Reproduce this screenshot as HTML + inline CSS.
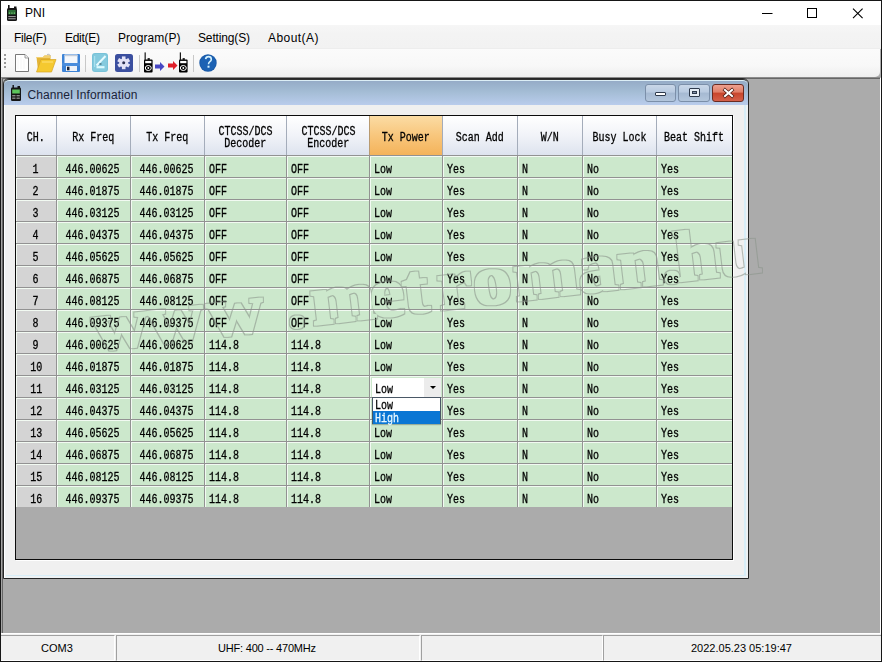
<!DOCTYPE html>
<html><head><meta charset="utf-8">
<style>
*{margin:0;padding:0;box-sizing:border-box}
html,body{width:882px;height:662px;overflow:hidden;background:#ababab;font-family:"Liberation Sans",sans-serif;position:relative}
.abs{position:absolute}
#frame{position:absolute;left:0;top:0;width:882px;height:662px;border:1px solid #161616;pointer-events:none;z-index:50}
#title{position:absolute;left:0;top:0;width:882px;height:25px;background:#fff}
#title .t{position:absolute;left:25px;top:6px;font-size:12px;color:#000}
#menu{position:absolute;left:0;top:25px;width:882px;height:24px;background:linear-gradient(#f6f6f6,#f3f3f3 40%,#f2f2f2);border-bottom:1px solid #ededed}
#menu span{position:absolute;top:6px;font-size:12px;letter-spacing:-0.3px;color:#000}
#tool{position:absolute;left:0;top:49px;width:880px;height:28px;background:linear-gradient(#fbfbfb,#f8f8f8 60%,#eeeeee);border-bottom-right-radius:5px}
#toolshadow{position:absolute;left:0;top:77px;width:882px;height:2px;background:#6a6a6a}
#mdi{position:absolute;left:1px;top:77px;width:880px;height:556px;background:#ababab;border-top:1px solid #8a8a8a;border-left:1px solid #a4a4a4;border-right:1px solid #fff;box-shadow:inset 1px 1px 0 #666}
#status{position:absolute;left:1px;top:633px;width:880px;height:28px;background:#f0f0f0;border-top:1px solid #fff}
#status span{position:absolute;top:8px;font-size:11px;color:#000}
.pn{position:absolute;top:1px;height:26px;border-top:1px solid #a0a0a0;border-left:1px solid #a0a0a0;border-right:1px solid #fff;border-bottom:1px solid #fff}

#child{position:absolute;left:3px;top:78px;width:746px;height:501px;border:1px solid #262626;border-radius:6px 6px 0 0;background:#eef2f4;box-shadow:inset 1px 0 0 #fff}
#ctitle{position:absolute;left:0;top:0;width:744px;height:26px;background:linear-gradient(#94aac6,#a3bcd4 45%,#b9ccec);border-radius:5px 5px 0 0;border-top:1px solid #2e2e2e;box-shadow:inset 0 1px 0 #dceef6}
#ctitle .t{position:absolute;left:23.5px;top:7.5px;font-size:12px;letter-spacing:0.1px;color:#1a2338}
#client{position:absolute;left:2px;top:26px;width:740px;height:471px;background:#f0f0f0;border-right:2px solid #d8eef8;border-bottom:1px solid #d8eef8}
.wb{position:absolute;top:84px;height:18px;border:1px solid #7b8fa9;border-radius:3px;background:linear-gradient(#c9d7e8,#b8cae0 45%,#a5b9d2 50%,#b3c6dc)}
.wb.cl{border-color:#6a2b22;background:linear-gradient(#eea08f,#e07f68 45%,#c8452c 50%,#d5604a)}
#grid{position:absolute;left:15px;top:115px;width:718px;height:445px;background:#ababab;border:1px solid #0c0c0c;box-shadow:1px 1px 0 #fff}
.hc{position:absolute;background:linear-gradient(#ffffff,#f1f3f8 50%,#dde3ee);border-left:1px solid #a4acba;display:flex;align-items:center;justify-content:center;text-align:center;font-family:"Liberation Mono",monospace;font-size:12px;line-height:12px;color:#000;padding-top:4px}
.hc.sel{background:linear-gradient(#fbdca4,#f8c67c 50%,#f4b35a);border-left:1px solid #b89a70}
.cc{position:absolute;background:#cce8cc;border-top:1px solid #929292;border-left:1px solid #929292;box-shadow:inset 1px 1px 0 #f2faf2;font-family:"Liberation Mono",monospace;font-size:12px;line-height:23px;padding-top:2.5px;padding-left:4px;color:#000;white-space:nowrap}
.cc.ch{background:#d4d4d4;text-align:center;padding-left:0;border-left:none}
.cc.num{text-align:center;padding-left:0;padding-right:2px}
.cbx{position:absolute;left:2px;top:2px;width:69px;height:19px;background:#fff;padding-left:3px;line-height:20px;padding-top:1.5px}
.cbb{position:absolute;right:0;top:0;width:17px;height:19px;background:#ececec}
.arr{position:absolute;left:6px;top:8px;width:0;height:0;border-left:3px solid transparent;border-right:3px solid transparent;border-top:3px solid #000}
#dd{position:absolute;left:372px;top:397px;width:69px;height:27px;border:1px solid #4a5866;background:#fff;font-family:"Liberation Mono",monospace;font-size:12px;line-height:13px;z-index:5;box-shadow:0 1px 1px rgba(0,0,0,0.25)}
#dd div{height:13px;padding-left:2px;padding-top:2px}
#dd .hl{background:#0a76d4;color:#e8f8ff}
#status .s1{left:41px}
.tx{display:inline-block;transform:scaleX(0.8333);transform-origin:0 50%;-webkit-text-stroke:0.3px}
.hc .tx,.ch .tx,.num .tx{transform-origin:50% 50%}
</style></head><body>
<div id="title">
  <svg class="abs" style="left:7px;top:5px" width="11" height="17" viewBox="0 0 11 17">
    <rect x="1" y="0" width="1.6" height="4" fill="#111"/><rect x="7" y="1.5" width="2.5" height="2.5" fill="#111"/>
    <rect x="0" y="3" width="10" height="13" rx="1.5" fill="#151515"/>
    <rect x="1.3" y="5" width="7.4" height="4.5" fill="#2e6e36"/><rect x="1.8" y="7.5" width="1.2" height="1.2" fill="#7ad07a"/><rect x="4.3" y="7.5" width="1.2" height="1.2" fill="#7ad07a"/><rect x="6.8" y="7.5" width="1.2" height="1.2" fill="#7ad07a"/>
    <rect x="1.3" y="11" width="7.4" height="1.1" fill="#9a9a9a"/><rect x="1.3" y="13.2" width="7.4" height="1.1" fill="#9a9a9a"/>
  </svg>
  <span class="t">PNI</span>
  <svg class="abs" style="left:762px;top:8px" width="12" height="12"><rect x="0" y="5" width="10.5" height="1" fill="#000"/></svg>
  <svg class="abs" style="left:806px;top:8px" width="12" height="12"><rect x="1.5" y="0.5" width="9" height="9" fill="none" stroke="#000" stroke-width="1"/></svg>
  <svg class="abs" style="left:852px;top:8px" width="12" height="12"><path d="M1 0.6L10.6 10.2M10.6 0.6L1 10.2" stroke="#000" stroke-width="1.1"/></svg>
</div>
<div id="menu">
  <span style="left:14px">File(F)</span>
  <span style="left:65px">Edit(E)</span>
  <span style="left:118px;letter-spacing:0.05px">Program(P)</span>
  <span style="left:198px;letter-spacing:-0.15px">Setting(S)</span>
  <span style="left:268px;letter-spacing:0.45px">About(A)</span>
</div>
<div id="tool">
  <!-- grip -->
  <svg class="abs" style="left:3px;top:54px;top:5px" width="4" height="16"><rect x="1" y="0" width="2" height="2" fill="#9a9a9a"/><rect x="1" y="4" width="2" height="2" fill="#9a9a9a"/><rect x="1" y="8" width="2" height="2" fill="#9a9a9a"/><rect x="1" y="12" width="2" height="2" fill="#9a9a9a"/></svg>
  <!-- new -->
  <svg class="abs" style="left:15px;top:5px" width="14" height="18" viewBox="0 0 14 18"><path d="M0.5 0.5H10L13.5 4V17.5H0.5Z" fill="#fff" stroke="#6a6a6a" stroke-width="0.9"/><path d="M10 0.5V4H13.5" fill="#f0f0f0" stroke="#8a8a8a" stroke-width="0.8"/><path d="M3 3V15M6 3V15M9 5V15" stroke="#f2f2f2" stroke-width="0.6"/></svg>
  <!-- open folder -->
  <svg class="abs" style="left:35px;top:4px" width="22" height="20" viewBox="0 0 22 20"><path d="M1.5 4H8L9.5 2.5H15.5V17.5H3Z" fill="#e3b438"/><path d="M1.5 4H8L9.5 2.5H15.5V5H1.5Z" fill="#f2d070"/><path d="M6 6.5H21L16.5 19H1.5Z" fill="#f5c930" stroke="#d6a424" stroke-width="0.7"/><path d="M7 9H18" stroke="#ffe27a" stroke-width="1"/><path d="M12 1.5Q14.5 0.2 15.5 3" fill="none" stroke="#b0b0b0" stroke-width="0.8"/></svg>
  <!-- save -->
  <svg class="abs" style="left:62px;top:5px" width="18" height="18" viewBox="0 0 18 18"><path d="M0 1Q0 0 1 0H17Q18 0 18 1V17Q18 18 17 18H1Q0 18 0 17Z" fill="#3d83d6"/><rect x="2.5" y="0.5" width="13" height="8.5" fill="#f4f7fb"/><rect x="2.5" y="1" width="13" height="1.2" fill="#c4ccd8"/><rect x="0" y="9" width="18" height="3" fill="#4a8ddc"/><rect x="4" y="12" width="11" height="5" fill="#eef2f8"/><rect x="5" y="12.7" width="2.5" height="3.6" fill="#1b2538"/></svg>
  <div class="abs" style="left:85px;top:6px;width:1px;height:17px;background:#c8c8c8"></div>
  <!-- edit (light blue) -->
  <svg class="abs" style="left:92px;top:4px" width="16" height="19" viewBox="0 0 16 19"><rect x="0" y="0" width="16" height="19" rx="3" fill="#78c2d8"/><rect x="1" y="1" width="14" height="17" rx="2.5" fill="#84cade"/><rect x="2" y="3" width="1.2" height="11" fill="#a8e0ee"/><path d="M4.5 12.5L13.5 3" stroke="#e6fbff" stroke-width="2"/><path d="M4.5 14.2H12.5" stroke="#dcfaff" stroke-width="2.2"/><rect x="7.5" y="10" width="2" height="2" fill="#5a8a9a"/></svg>
  <!-- settings -->
  <svg class="abs" style="left:115px;top:5px" width="18" height="18" viewBox="0 0 18 18"><rect x="0" y="0" width="18" height="18" rx="2.5" fill="#3b4f9f"/><g transform="translate(8.7 8.8)" fill="#e2e2f6"><circle r="4.4"/><rect x="-1.8" y="-6.4" width="3.6" height="12.8"/><rect x="-1.8" y="-6.4" width="3.6" height="12.8" transform="rotate(60)"/><rect x="-1.8" y="-6.4" width="3.6" height="12.8" transform="rotate(-60)"/><circle r="1.5" fill="#2a2e4e"/></g></svg>
  <div class="abs" style="left:139px;top:6px;width:1px;height:17px;background:#c8c8c8"></div>
  <!-- radio 1 -->
  <svg class="abs" style="left:143px;top:2px" width="11" height="23" viewBox="0 0 11 23"><rect x="1.6" y="1.4" width="1.1" height="7.5" fill="#000"/><rect x="1" y="8.4" width="8.6" height="13.2" rx="1" fill="#000"/><rect x="4.6" y="7.2" width="2.2" height="1.6" fill="#000"/><rect x="2.2" y="9.9" width="6.2" height="2.3" fill="#fff"/><ellipse cx="5.3" cy="17" rx="3" ry="2.5" fill="none" stroke="#fff" stroke-width="1"/><circle cx="5.3" cy="17" r="0.9" fill="#fff"/></svg>
  <!-- blue arrow -->
  <svg class="abs" style="left:155px;top:13px" width="10" height="9" viewBox="0 0 10 9"><path d="M0 2.5H5V0L9.5 4.5L5 9V6.5H0Z" fill="#4848c4"/></svg>
  <!-- red arrow -->
  <svg class="abs" style="left:168px;top:12px" width="10" height="9" viewBox="0 0 10 9"><path d="M0 2.5H5V0L9.5 4.5L5 9V6.5H0Z" fill="#e01f2a"/></svg>
  <!-- radio 2 -->
  <svg class="abs" style="left:178px;top:2px" width="11" height="23" viewBox="0 0 11 23"><rect x="1.8" y="1.4" width="1.1" height="7.5" fill="#000"/><rect x="1" y="8.4" width="8.6" height="13.2" rx="1" fill="#000"/><rect x="4.6" y="7.2" width="2.2" height="1.6" fill="#000"/><rect x="2.2" y="9.9" width="6.2" height="2.3" fill="#fff"/><ellipse cx="5.3" cy="17" rx="3" ry="2.5" fill="none" stroke="#fff" stroke-width="1"/><circle cx="5.3" cy="17" r="0.9" fill="#fff"/></svg>
  <div class="abs" style="left:193px;top:6px;width:1px;height:17px;background:#c8c8c8"></div>
  <!-- help -->
  <svg class="abs" style="left:199px;top:5px" width="18" height="18" viewBox="0 0 18 18"><circle cx="9" cy="9" r="8.7" fill="#1a5aa8"/><circle cx="9" cy="9" r="7.8" fill="#1c62b4"/><path d="M6.6 5.2Q7 2.6 9.5 2.6Q12.3 2.6 12.3 5.2Q12.3 6.6 10.9 7.6Q9.5 8.6 9.5 10.2" fill="none" stroke="#d4f2ff" stroke-width="1.6"/><rect x="8.5" y="11.7" width="2" height="2" fill="#d4f2ff"/></svg>
</div>
<div id="mdi"></div>
<div id="child">
  <div id="ctitle">
    <svg class="abs" style="left:7px;top:5px" width="10" height="16" viewBox="0 0 10 16"><rect x="1.5" y="0" width="1.4" height="3" fill="#111"/><rect x="6.5" y="1" width="2.5" height="2" fill="#111"/><rect x="0" y="2.5" width="10" height="13.5" rx="1.3" fill="#141414"/><rect x="1.2" y="4.5" width="7.6" height="4" fill="#5cc45c"/><rect x="1.2" y="10" width="3.3" height="1.4" fill="#8a8a8a"/><rect x="5.5" y="10" width="3.3" height="1.4" fill="#8a8a8a"/><rect x="1.2" y="12.5" width="3.3" height="1.4" fill="#8a8a8a"/><rect x="5.5" y="12.5" width="3.3" height="1.4" fill="#8a8a8a"/></svg>
    <span class="t">Channel Information</span>
  </div>
  <div id="client"></div>
</div>
<div class="wb" style="left:645px;width:31px"><div class="abs" style="left:9px;top:7px;width:11px;height:4px;background:#fff;border:1px solid #2e3a4c;border-radius:1px"></div></div>
<div class="wb" style="left:678px;width:32px"><div class="abs" style="left:10px;top:3px;width:11px;height:9px;background:#e4ecf4;border:1px solid #2e3a4c;border-radius:1px"><div class="abs" style="left:2px;top:2px;width:5px;height:3px;border:1px solid #2e3a4c;background:#8090a8"></div></div></div>
<div class="wb cl" style="left:712px;width:32px"><svg class="abs" style="left:9px;top:2px" width="13" height="12" viewBox="0 0 13 12"><path d="M3 3L10 9M10 3L3 9" stroke="#4a1810" stroke-width="3.4" stroke-linecap="square"/><path d="M3 3L10 9M10 3L3 9" stroke="#fff" stroke-width="2.1" stroke-linecap="square"/></svg></div>
<div id="grid"></div>
<div class="hc" style="border-left:none;left:16px;top:116px;width:40px;height:39px"><div><span class="tx">CH.</span></div></div>
<div class="hc" style="left:56px;top:116px;width:74px;height:39px"><div><span class="tx">Rx Freq</span></div></div>
<div class="hc" style="left:130px;top:116px;width:74px;height:39px"><div><span class="tx">Tx Freq</span></div></div>
<div class="hc" style="left:204px;top:116px;width:82px;height:39px"><div><span class="tx">CTCSS/DCS</span><br><span class="tx">Decoder</span></div></div>
<div class="hc" style="left:286px;top:116px;width:83px;height:39px"><div><span class="tx">CTCSS/DCS</span><br><span class="tx">Encoder</span></div></div>
<div class="hc sel" style="left:369px;top:116px;width:73px;height:39px"><div><span class="tx">Tx Power</span></div></div>
<div class="hc" style="left:442px;top:116px;width:75px;height:39px"><div><span class="tx">Scan Add</span></div></div>
<div class="hc" style="left:517px;top:116px;width:65px;height:39px"><div><span class="tx">W/N</span></div></div>
<div class="hc" style="left:582px;top:116px;width:74px;height:39px"><div><span class="tx">Busy Lock</span></div></div>
<div class="hc" style="left:656px;top:116px;width:76px;height:39px"><div><span class="tx">Beat Shift</span></div></div>
<div class="cc ch" style="left:16px;top:155px;width:40px;height:22px"><span class="tx">1</span></div>
<div class="cc num" style="left:56px;top:155px;width:74px;height:22px"><span class="tx">446.00625</span></div>
<div class="cc num" style="left:130px;top:155px;width:74px;height:22px"><span class="tx">446.00625</span></div>
<div class="cc" style="left:204px;top:155px;width:82px;height:22px"><span class="tx">OFF</span></div>
<div class="cc" style="left:286px;top:155px;width:83px;height:22px"><span class="tx">OFF</span></div>
<div class="cc" style="left:369px;top:155px;width:73px;height:22px"><span class="tx">Low</span></div>
<div class="cc" style="left:442px;top:155px;width:75px;height:22px"><span class="tx">Yes</span></div>
<div class="cc" style="left:517px;top:155px;width:65px;height:22px"><span class="tx">N</span></div>
<div class="cc" style="left:582px;top:155px;width:74px;height:22px"><span class="tx">No</span></div>
<div class="cc" style="left:656px;top:155px;width:76px;height:22px"><span class="tx">Yes</span></div>
<div class="cc ch" style="left:16px;top:177px;width:40px;height:22px"><span class="tx">2</span></div>
<div class="cc num" style="left:56px;top:177px;width:74px;height:22px"><span class="tx">446.01875</span></div>
<div class="cc num" style="left:130px;top:177px;width:74px;height:22px"><span class="tx">446.01875</span></div>
<div class="cc" style="left:204px;top:177px;width:82px;height:22px"><span class="tx">OFF</span></div>
<div class="cc" style="left:286px;top:177px;width:83px;height:22px"><span class="tx">OFF</span></div>
<div class="cc" style="left:369px;top:177px;width:73px;height:22px"><span class="tx">Low</span></div>
<div class="cc" style="left:442px;top:177px;width:75px;height:22px"><span class="tx">Yes</span></div>
<div class="cc" style="left:517px;top:177px;width:65px;height:22px"><span class="tx">N</span></div>
<div class="cc" style="left:582px;top:177px;width:74px;height:22px"><span class="tx">No</span></div>
<div class="cc" style="left:656px;top:177px;width:76px;height:22px"><span class="tx">Yes</span></div>
<div class="cc ch" style="left:16px;top:199px;width:40px;height:22px"><span class="tx">3</span></div>
<div class="cc num" style="left:56px;top:199px;width:74px;height:22px"><span class="tx">446.03125</span></div>
<div class="cc num" style="left:130px;top:199px;width:74px;height:22px"><span class="tx">446.03125</span></div>
<div class="cc" style="left:204px;top:199px;width:82px;height:22px"><span class="tx">OFF</span></div>
<div class="cc" style="left:286px;top:199px;width:83px;height:22px"><span class="tx">OFF</span></div>
<div class="cc" style="left:369px;top:199px;width:73px;height:22px"><span class="tx">Low</span></div>
<div class="cc" style="left:442px;top:199px;width:75px;height:22px"><span class="tx">Yes</span></div>
<div class="cc" style="left:517px;top:199px;width:65px;height:22px"><span class="tx">N</span></div>
<div class="cc" style="left:582px;top:199px;width:74px;height:22px"><span class="tx">No</span></div>
<div class="cc" style="left:656px;top:199px;width:76px;height:22px"><span class="tx">Yes</span></div>
<div class="cc ch" style="left:16px;top:221px;width:40px;height:22px"><span class="tx">4</span></div>
<div class="cc num" style="left:56px;top:221px;width:74px;height:22px"><span class="tx">446.04375</span></div>
<div class="cc num" style="left:130px;top:221px;width:74px;height:22px"><span class="tx">446.04375</span></div>
<div class="cc" style="left:204px;top:221px;width:82px;height:22px"><span class="tx">OFF</span></div>
<div class="cc" style="left:286px;top:221px;width:83px;height:22px"><span class="tx">OFF</span></div>
<div class="cc" style="left:369px;top:221px;width:73px;height:22px"><span class="tx">Low</span></div>
<div class="cc" style="left:442px;top:221px;width:75px;height:22px"><span class="tx">Yes</span></div>
<div class="cc" style="left:517px;top:221px;width:65px;height:22px"><span class="tx">N</span></div>
<div class="cc" style="left:582px;top:221px;width:74px;height:22px"><span class="tx">No</span></div>
<div class="cc" style="left:656px;top:221px;width:76px;height:22px"><span class="tx">Yes</span></div>
<div class="cc ch" style="left:16px;top:243px;width:40px;height:22px"><span class="tx">5</span></div>
<div class="cc num" style="left:56px;top:243px;width:74px;height:22px"><span class="tx">446.05625</span></div>
<div class="cc num" style="left:130px;top:243px;width:74px;height:22px"><span class="tx">446.05625</span></div>
<div class="cc" style="left:204px;top:243px;width:82px;height:22px"><span class="tx">OFF</span></div>
<div class="cc" style="left:286px;top:243px;width:83px;height:22px"><span class="tx">OFF</span></div>
<div class="cc" style="left:369px;top:243px;width:73px;height:22px"><span class="tx">Low</span></div>
<div class="cc" style="left:442px;top:243px;width:75px;height:22px"><span class="tx">Yes</span></div>
<div class="cc" style="left:517px;top:243px;width:65px;height:22px"><span class="tx">N</span></div>
<div class="cc" style="left:582px;top:243px;width:74px;height:22px"><span class="tx">No</span></div>
<div class="cc" style="left:656px;top:243px;width:76px;height:22px"><span class="tx">Yes</span></div>
<div class="cc ch" style="left:16px;top:265px;width:40px;height:22px"><span class="tx">6</span></div>
<div class="cc num" style="left:56px;top:265px;width:74px;height:22px"><span class="tx">446.06875</span></div>
<div class="cc num" style="left:130px;top:265px;width:74px;height:22px"><span class="tx">446.06875</span></div>
<div class="cc" style="left:204px;top:265px;width:82px;height:22px"><span class="tx">OFF</span></div>
<div class="cc" style="left:286px;top:265px;width:83px;height:22px"><span class="tx">OFF</span></div>
<div class="cc" style="left:369px;top:265px;width:73px;height:22px"><span class="tx">Low</span></div>
<div class="cc" style="left:442px;top:265px;width:75px;height:22px"><span class="tx">Yes</span></div>
<div class="cc" style="left:517px;top:265px;width:65px;height:22px"><span class="tx">N</span></div>
<div class="cc" style="left:582px;top:265px;width:74px;height:22px"><span class="tx">No</span></div>
<div class="cc" style="left:656px;top:265px;width:76px;height:22px"><span class="tx">Yes</span></div>
<div class="cc ch" style="left:16px;top:287px;width:40px;height:22px"><span class="tx">7</span></div>
<div class="cc num" style="left:56px;top:287px;width:74px;height:22px"><span class="tx">446.08125</span></div>
<div class="cc num" style="left:130px;top:287px;width:74px;height:22px"><span class="tx">446.08125</span></div>
<div class="cc" style="left:204px;top:287px;width:82px;height:22px"><span class="tx">OFF</span></div>
<div class="cc" style="left:286px;top:287px;width:83px;height:22px"><span class="tx">OFF</span></div>
<div class="cc" style="left:369px;top:287px;width:73px;height:22px"><span class="tx">Low</span></div>
<div class="cc" style="left:442px;top:287px;width:75px;height:22px"><span class="tx">Yes</span></div>
<div class="cc" style="left:517px;top:287px;width:65px;height:22px"><span class="tx">N</span></div>
<div class="cc" style="left:582px;top:287px;width:74px;height:22px"><span class="tx">No</span></div>
<div class="cc" style="left:656px;top:287px;width:76px;height:22px"><span class="tx">Yes</span></div>
<div class="cc ch" style="left:16px;top:309px;width:40px;height:22px"><span class="tx">8</span></div>
<div class="cc num" style="left:56px;top:309px;width:74px;height:22px"><span class="tx">446.09375</span></div>
<div class="cc num" style="left:130px;top:309px;width:74px;height:22px"><span class="tx">446.09375</span></div>
<div class="cc" style="left:204px;top:309px;width:82px;height:22px"><span class="tx">OFF</span></div>
<div class="cc" style="left:286px;top:309px;width:83px;height:22px"><span class="tx">OFF</span></div>
<div class="cc" style="left:369px;top:309px;width:73px;height:22px"><span class="tx">Low</span></div>
<div class="cc" style="left:442px;top:309px;width:75px;height:22px"><span class="tx">Yes</span></div>
<div class="cc" style="left:517px;top:309px;width:65px;height:22px"><span class="tx">N</span></div>
<div class="cc" style="left:582px;top:309px;width:74px;height:22px"><span class="tx">No</span></div>
<div class="cc" style="left:656px;top:309px;width:76px;height:22px"><span class="tx">Yes</span></div>
<div class="cc ch" style="left:16px;top:331px;width:40px;height:22px"><span class="tx">9</span></div>
<div class="cc num" style="left:56px;top:331px;width:74px;height:22px"><span class="tx">446.00625</span></div>
<div class="cc num" style="left:130px;top:331px;width:74px;height:22px"><span class="tx">446.00625</span></div>
<div class="cc" style="left:204px;top:331px;width:82px;height:22px"><span class="tx">114.8</span></div>
<div class="cc" style="left:286px;top:331px;width:83px;height:22px"><span class="tx">114.8</span></div>
<div class="cc" style="left:369px;top:331px;width:73px;height:22px"><span class="tx">Low</span></div>
<div class="cc" style="left:442px;top:331px;width:75px;height:22px"><span class="tx">Yes</span></div>
<div class="cc" style="left:517px;top:331px;width:65px;height:22px"><span class="tx">N</span></div>
<div class="cc" style="left:582px;top:331px;width:74px;height:22px"><span class="tx">No</span></div>
<div class="cc" style="left:656px;top:331px;width:76px;height:22px"><span class="tx">Yes</span></div>
<div class="cc ch" style="left:16px;top:353px;width:40px;height:22px"><span class="tx">10</span></div>
<div class="cc num" style="left:56px;top:353px;width:74px;height:22px"><span class="tx">446.01875</span></div>
<div class="cc num" style="left:130px;top:353px;width:74px;height:22px"><span class="tx">446.01875</span></div>
<div class="cc" style="left:204px;top:353px;width:82px;height:22px"><span class="tx">114.8</span></div>
<div class="cc" style="left:286px;top:353px;width:83px;height:22px"><span class="tx">114.8</span></div>
<div class="cc" style="left:369px;top:353px;width:73px;height:22px"><span class="tx">Low</span></div>
<div class="cc" style="left:442px;top:353px;width:75px;height:22px"><span class="tx">Yes</span></div>
<div class="cc" style="left:517px;top:353px;width:65px;height:22px"><span class="tx">N</span></div>
<div class="cc" style="left:582px;top:353px;width:74px;height:22px"><span class="tx">No</span></div>
<div class="cc" style="left:656px;top:353px;width:76px;height:22px"><span class="tx">Yes</span></div>
<div class="cc ch" style="left:16px;top:375px;width:40px;height:22px"><span class="tx">11</span></div>
<div class="cc num" style="left:56px;top:375px;width:74px;height:22px"><span class="tx">446.03125</span></div>
<div class="cc num" style="left:130px;top:375px;width:74px;height:22px"><span class="tx">446.03125</span></div>
<div class="cc" style="left:204px;top:375px;width:82px;height:22px"><span class="tx">114.8</span></div>
<div class="cc" style="left:286px;top:375px;width:83px;height:22px"><span class="tx">114.8</span></div>
<div class="cc combo" style="left:369px;top:375px;width:73px;height:22px"><div class="cbx"><span class="tx">Low</span><div class="cbb"><i class="arr"></i></div></div></div>
<div class="cc" style="left:442px;top:375px;width:75px;height:22px"><span class="tx">Yes</span></div>
<div class="cc" style="left:517px;top:375px;width:65px;height:22px"><span class="tx">N</span></div>
<div class="cc" style="left:582px;top:375px;width:74px;height:22px"><span class="tx">No</span></div>
<div class="cc" style="left:656px;top:375px;width:76px;height:22px"><span class="tx">Yes</span></div>
<div class="cc ch" style="left:16px;top:397px;width:40px;height:22px"><span class="tx">12</span></div>
<div class="cc num" style="left:56px;top:397px;width:74px;height:22px"><span class="tx">446.04375</span></div>
<div class="cc num" style="left:130px;top:397px;width:74px;height:22px"><span class="tx">446.04375</span></div>
<div class="cc" style="left:204px;top:397px;width:82px;height:22px"><span class="tx">114.8</span></div>
<div class="cc" style="left:286px;top:397px;width:83px;height:22px"><span class="tx">114.8</span></div>
<div class="cc" style="left:369px;top:397px;width:73px;height:22px"><span class="tx">Low</span></div>
<div class="cc" style="left:442px;top:397px;width:75px;height:22px"><span class="tx">Yes</span></div>
<div class="cc" style="left:517px;top:397px;width:65px;height:22px"><span class="tx">N</span></div>
<div class="cc" style="left:582px;top:397px;width:74px;height:22px"><span class="tx">No</span></div>
<div class="cc" style="left:656px;top:397px;width:76px;height:22px"><span class="tx">Yes</span></div>
<div class="cc ch" style="left:16px;top:419px;width:40px;height:22px"><span class="tx">13</span></div>
<div class="cc num" style="left:56px;top:419px;width:74px;height:22px"><span class="tx">446.05625</span></div>
<div class="cc num" style="left:130px;top:419px;width:74px;height:22px"><span class="tx">446.05625</span></div>
<div class="cc" style="left:204px;top:419px;width:82px;height:22px"><span class="tx">114.8</span></div>
<div class="cc" style="left:286px;top:419px;width:83px;height:22px"><span class="tx">114.8</span></div>
<div class="cc" style="left:369px;top:419px;width:73px;height:22px"><span class="tx">Low</span></div>
<div class="cc" style="left:442px;top:419px;width:75px;height:22px"><span class="tx">Yes</span></div>
<div class="cc" style="left:517px;top:419px;width:65px;height:22px"><span class="tx">N</span></div>
<div class="cc" style="left:582px;top:419px;width:74px;height:22px"><span class="tx">No</span></div>
<div class="cc" style="left:656px;top:419px;width:76px;height:22px"><span class="tx">Yes</span></div>
<div class="cc ch" style="left:16px;top:441px;width:40px;height:22px"><span class="tx">14</span></div>
<div class="cc num" style="left:56px;top:441px;width:74px;height:22px"><span class="tx">446.06875</span></div>
<div class="cc num" style="left:130px;top:441px;width:74px;height:22px"><span class="tx">446.06875</span></div>
<div class="cc" style="left:204px;top:441px;width:82px;height:22px"><span class="tx">114.8</span></div>
<div class="cc" style="left:286px;top:441px;width:83px;height:22px"><span class="tx">114.8</span></div>
<div class="cc" style="left:369px;top:441px;width:73px;height:22px"><span class="tx">Low</span></div>
<div class="cc" style="left:442px;top:441px;width:75px;height:22px"><span class="tx">Yes</span></div>
<div class="cc" style="left:517px;top:441px;width:65px;height:22px"><span class="tx">N</span></div>
<div class="cc" style="left:582px;top:441px;width:74px;height:22px"><span class="tx">No</span></div>
<div class="cc" style="left:656px;top:441px;width:76px;height:22px"><span class="tx">Yes</span></div>
<div class="cc ch" style="left:16px;top:463px;width:40px;height:22px"><span class="tx">15</span></div>
<div class="cc num" style="left:56px;top:463px;width:74px;height:22px"><span class="tx">446.08125</span></div>
<div class="cc num" style="left:130px;top:463px;width:74px;height:22px"><span class="tx">446.08125</span></div>
<div class="cc" style="left:204px;top:463px;width:82px;height:22px"><span class="tx">114.8</span></div>
<div class="cc" style="left:286px;top:463px;width:83px;height:22px"><span class="tx">114.8</span></div>
<div class="cc" style="left:369px;top:463px;width:73px;height:22px"><span class="tx">Low</span></div>
<div class="cc" style="left:442px;top:463px;width:75px;height:22px"><span class="tx">Yes</span></div>
<div class="cc" style="left:517px;top:463px;width:65px;height:22px"><span class="tx">N</span></div>
<div class="cc" style="left:582px;top:463px;width:74px;height:22px"><span class="tx">No</span></div>
<div class="cc" style="left:656px;top:463px;width:76px;height:22px"><span class="tx">Yes</span></div>
<div class="cc ch" style="left:16px;top:485px;width:40px;height:22px"><span class="tx">16</span></div>
<div class="cc num" style="left:56px;top:485px;width:74px;height:22px"><span class="tx">446.09375</span></div>
<div class="cc num" style="left:130px;top:485px;width:74px;height:22px"><span class="tx">446.09375</span></div>
<div class="cc" style="left:204px;top:485px;width:82px;height:22px"><span class="tx">114.8</span></div>
<div class="cc" style="left:286px;top:485px;width:83px;height:22px"><span class="tx">114.8</span></div>
<div class="cc" style="left:369px;top:485px;width:73px;height:22px"><span class="tx">Low</span></div>
<div class="cc" style="left:442px;top:485px;width:75px;height:22px"><span class="tx">Yes</span></div>
<div class="cc" style="left:517px;top:485px;width:65px;height:22px"><span class="tx">N</span></div>
<div class="cc" style="left:582px;top:485px;width:74px;height:22px"><span class="tx">No</span></div>
<div class="cc" style="left:656px;top:485px;width:76px;height:22px"><span class="tx">Yes</span></div>
<div id="dd"><div><span class="tx">Low</span></div><div class="hl"><span class="tx">High</span></div></div>
<div id="status">
  <div class="pn" style="left:0;width:114px;border-left:none"></div>
  <div class="pn" style="left:115px;width:304px"></div>
  <div class="pn" style="left:420px;width:182px"></div>
  <div class="pn" style="left:602px;width:278px;border-right:none"></div>
  <span style="left:40px">COM3</span>
  <span style="left:217px;letter-spacing:-0.2px">UHF: 400 -- 470MHz</span>
  <span style="left:690px">2022.05.23 05:19:47</span>
</div>
<svg id="wm" class="abs" style="left:0;top:0;z-index:20;pointer-events:none" width="882" height="662"><defs><filter id="wf" filterUnits="userSpaceOnUse" x="0" y="0" width="882" height="662"><feMorphology in="SourceAlpha" operator="dilate" radius="2.2" result="a"/><feMorphology in="SourceAlpha" operator="dilate" radius="1.4" result="b"/><feComposite in="a" in2="b" operator="out" result="ring"/><feFlood flood-color="#8a948a" flood-opacity="0.6"/><feComposite in2="ring" operator="in"/></filter></defs><g filter="url(#wf)"><g transform="translate(95 351) rotate(-6.8) scale(1.26 1.14)"><text x="0.0 44.0 91.9 154.3 174.2 221.4 247.8 275.7 303.7 336.5 387.6 419.6 454.0 465.2 499.5" y="0" font-family="Liberation Serif" font-weight="bold" font-size="62" fill="#000">www.metroman.hu</text></g></g></svg>
<div id="frame"></div>
</body></html>
